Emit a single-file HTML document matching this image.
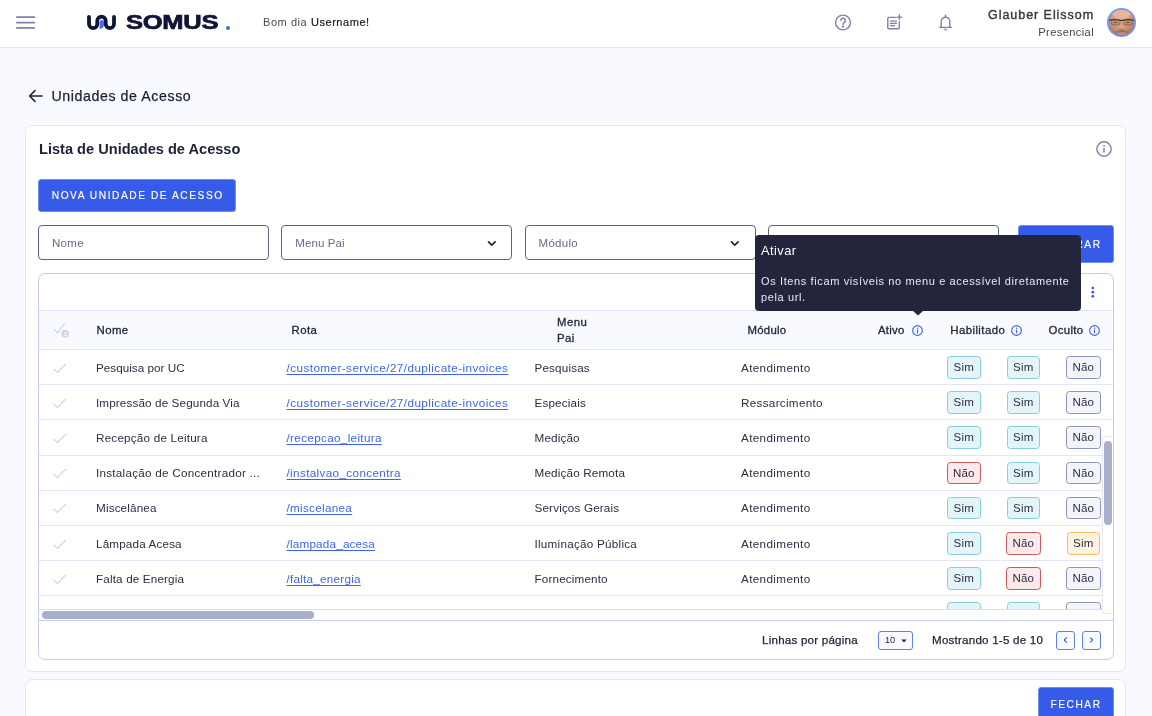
<!DOCTYPE html>
<html lang="pt-BR">
<head>
<meta charset="utf-8">
<title>Unidades de Acesso</title>
<style>
*{box-sizing:border-box;margin:0;padding:0}
html,body{width:1152px;height:716px;overflow:hidden}
body{background:#f8faff;font-family:"Liberation Sans",sans-serif;color:#23263b;position:relative;font-size:12px}
#wrap{position:absolute;left:0;top:0;width:1152px;height:716px;will-change:transform}
.abs{position:absolute}
.t{position:absolute;white-space:nowrap;line-height:1}
#hdr{position:absolute;left:0;top:0;width:1152px;height:48px;background:#fff;border-bottom:1px solid #e4e6f5}
#burger span{position:absolute;left:16px;width:19px;height:1.8px;background:#7e83a7;border-radius:1px}
.card{position:absolute;background:#fff;border:1px solid #e3e6f4;border-radius:7px}
.btn{position:absolute;background:#355be8;border:1px solid #6f8df3;border-radius:3px;color:#fff;font-size:10.2px;letter-spacing:1.55px;text-align:center;-webkit-text-stroke:.15px #fff}
.inp{position:absolute;height:35px;border:1px solid #5f6381;border-radius:4px;background:#fff;top:225px}
.inp .t{left:13px;top:11.5px;font-size:11.5px;color:#666a86;letter-spacing:.3px}
#tbl{position:absolute;left:38px;top:273px;width:1076px;height:387px;border:1px solid #c9cce6;border-radius:7px;background:#fff;overflow:hidden}
#thead{position:absolute;left:0;top:36px;width:1074px;height:40px;background:#f8faff;border-top:1px solid #dfe2f3;border-bottom:1px solid #dfe2f3}
.th{position:absolute;white-space:nowrap;font-size:11.4px;color:#23263b;line-height:1;letter-spacing:.42px;-webkit-text-stroke:.3px #23263b}
.row{position:absolute;left:0;width:1074px;height:35.2px;border-bottom:1px solid #e4e6f5}
.row .c{position:absolute;white-space:nowrap;font-size:11.7px;line-height:1;top:11.5px;color:#2b2e44}
.row a{color:#3f66ea;text-decoration:underline;text-decoration-thickness:1px;text-underline-offset:1.5px;text-decoration-skip-ink:none}
.bd{position:absolute;top:6.1px;height:22.5px;border:1px solid;border-radius:3.5px;font-size:11.5px;line-height:21.2px;text-align:center;color:#2b2e44;letter-spacing:.2px}
.sim{background:#e4f5fa;border-color:#86cfdb}
.nr{background:#fde9ea;border-color:#c9595b}
.ng{background:#f4f5fa;border-color:#8d94b6}
.so{background:#fef3e1;border-color:#f2bb62}
.chk{position:absolute;left:14.2px;top:12.6px}
.ft{position:absolute;white-space:nowrap;line-height:1;font-size:11.6px;letter-spacing:.22px;color:#23263b;-webkit-text-stroke:.25px #23263b;top:360.4px}
.pg{position:absolute;top:357px;width:19px;height:18.6px;border:1px solid #5f7ff0;border-radius:3px;background:#f8faff}
</style>
</head>
<body>
<div id="wrap">
<div id="hdr">
  <svg class="abs" style="left:14px;top:14px" width="24" height="18" viewBox="0 0 24 18" fill="none" stroke="#7e83a7" stroke-width="1.8" stroke-linecap="round"><path d="M2.9 3.2h17.3M2.9 8.55h17.3M2.9 13.9h17.3"/></svg>
  <svg class="abs" style="left:84px;top:10px" width="36" height="24" viewBox="0 0 36 24">
    <path d="M5 6.8v7.2a4.15 4.15 0 0 0 8.3 0v-3.2a4.2 4.2 0 0 1 8.4 0v3.2a4.15 4.15 0 0 0 8.3 0V6.8" fill="none" stroke="#0f1535" stroke-width="3.8" stroke-linecap="round"/>
    <path d="M15.6 12.2a2.2 2.2 0 0 1 4.4 0v2.6a4.2 4.2 0 0 1-4.4 4.1z" fill="#3f6df2"/>
  </svg>
  <div class="t" id="logo" style="left:126px;top:12.3px;font-size:20px;font-weight:bold;color:#0f1535;transform:scaleX(1.275);transform-origin:0 0;letter-spacing:-.2px;-webkit-text-stroke:.7px #0f1535">SOMUS</div>
  <div class="abs" style="left:225.6px;top:26px;width:4px;height:4px;border-radius:50%;background:#3f6df2"></div>
  <div class="t" style="left:263px;top:17px;font-size:11px;color:#4a4a50;letter-spacing:.56px">Bom dia <span style="color:#222228;-webkit-text-stroke:.2px #222228">Username!</span></div>
  <svg class="abs" style="left:833px;top:12px" width="22" height="22" viewBox="0 0 22 22" fill="none" stroke="#7d83a6" stroke-width="1.4" stroke-linecap="round" stroke-linejoin="round">
    <circle cx="10" cy="10.5" r="7.4"/>
    <path d="M7.8 8.6a2.3 2.3 0 1 1 3.4 2c-.8.5-1.2.9-1.2 1.9"/>
    <circle cx="10" cy="14.6" r=".5" fill="#7d83a6"/>
  </svg>
  <svg class="abs" style="left:885px;top:12px" width="22" height="22" viewBox="0 0 22 22" fill="none" stroke="#7d83a6" stroke-width="1.4" stroke-linecap="round" stroke-linejoin="round">
    <path d="M10.5 5.4H3.8a1 1 0 0 0-1 1v9.4a1 1 0 0 0 1 1h9.4a1 1 0 0 0 1-1V9.6"/>
    <path d="M5.3 9.2h6.2M5.3 11.4h6.2M5.3 13.6h4.4" stroke-width="1.2"/>
    <path d="M14.4 2.6v5M11.9 5.1h5"/>
  </svg>
  <svg class="abs" style="left:935px;top:12px" width="22" height="22" viewBox="0 0 22 22" fill="none" stroke="#7d83a6" stroke-width="1.4" stroke-linecap="round" stroke-linejoin="round">
    <path d="M4.6 15.4h11.8M6.2 15.2V9.6a4.3 4.3 0 0 1 8.6 0v5.6"/>
    <path d="M10.5 3.2v1.6"/>
    <path d="M9.3 17.4a1.3 1.3 0 0 0 2.4 0z" fill="#7d83a6" stroke-width=".6"/>
  </svg>
  <div class="t" style="right:58px;top:8.5px;font-size:12.5px;color:#3a3a3e;letter-spacing:.95px;-webkit-text-stroke:.4px #3a3a3e">Glauber Elissom</div>
  <div class="t" style="right:58px;top:27px;font-size:11.2px;color:#48484c;letter-spacing:.35px">Presencial</div>
  <svg class="abs" style="left:1106px;top:7px" width="31" height="31" viewBox="0 0 31 31">
    <defs>
      <clipPath id="avc"><circle cx="15.5" cy="15.5" r="12.7"/></clipPath>
      <radialGradient id="avg" cx="48%" cy="38%" r="62%"><stop offset="0" stop-color="#e2b497"/><stop offset=".55" stop-color="#cd9474"/><stop offset="1" stop-color="#9a6145"/></radialGradient>
      <filter id="avb" x="-20%" y="-20%" width="140%" height="140%"><feGaussianBlur stdDeviation=".55"/></filter>
    </defs>
    <circle cx="15.5" cy="15.5" r="14.5" fill="#7396f8"/>
    <g clip-path="url(#avc)">
      <rect width="31" height="31" fill="url(#avg)"/>
      <g filter="url(#avb)">
        <ellipse cx="15.5" cy="7" rx="9" ry="4.4" fill="#e3b79b"/>
        <rect x="4.4" y="13.3" width="10" height="4.6" rx="1.6" fill="#a58774" opacity=".6"/>
        <rect x="17" y="13.3" width="10" height="4.6" rx="1.6" fill="#a58774" opacity=".6"/>
        <path d="M3 13.4q5-1.2 10.4-.2l2.1.5 2.1-.5q5.4-1 10.4.2" stroke="#3b2f2b" stroke-width="1.25" fill="none"/>
        <path d="M5 15.2q.4 2.8 3 2.8h3.6q2.4 0 2.6-2.6M17.2 15.4q.2 2.6 2.6 2.6h3.6q2.6 0 3-2.8" stroke="#6b5348" stroke-width=".7" fill="none"/><ellipse cx="9.6" cy="15.4" rx="2" ry=".7" fill="#5a4338" opacity=".7"/><ellipse cx="21.8" cy="15.4" rx="2" ry=".7" fill="#5a4338" opacity=".7"/>
        <ellipse cx="15.6" cy="19.8" rx="2.6" ry="2.6" fill="#d9a284"/>
        <path d="M13.2 21.8q2.4 1.2 4.8 0" stroke="#a8694f" stroke-width=".8" fill="none"/>
        <path d="M9.6 24.6q6-3.2 12 0l-.8 1.4q-5.2-1.6-10.4 0z" fill="#8c776a"/>
        <ellipse cx="15.6" cy="26.6" rx="4.6" ry="1.3" fill="#cf8580"/>
        <ellipse cx="15.6" cy="29.8" rx="6" ry="1.6" fill="#b09484"/>
      </g>
    </g>
  </svg>
</div>

<svg class="abs" style="left:28px;top:89px" width="16" height="14" viewBox="0 0 16 14" fill="none" stroke="#1d2136" stroke-width="1.5" stroke-linecap="round" stroke-linejoin="round"><path d="M14 7H2M7 1.6L1.6 7 7 12.4"/></svg>
<div class="t" style="left:51.5px;top:89px;font-size:14.2px;color:#1d2136;letter-spacing:.58px;-webkit-text-stroke:.25px #1d2136">Unidades de Acesso</div>

<div class="card" style="left:25px;top:125px;width:1101px;height:547px"></div>
<div class="t" style="left:39px;top:141.5px;font-size:14.6px;font-weight:bold;color:#1d2136;letter-spacing:0">Lista de Unidades de Acesso</div>
<svg class="abs" style="left:1095px;top:140px" width="18" height="18" viewBox="0 0 18 18" fill="none" stroke="#7d82a6" stroke-width="1.4" stroke-linecap="round"><circle cx="9" cy="9" r="7.2"/><path d="M9 8.4v3.7" stroke-width="1.5"/><circle cx="9" cy="5.8" r=".55" fill="#7d82a6" stroke-width=".6"/></svg>

<div class="btn" style="left:38px;top:179px;width:198px;height:33px;line-height:32.4px;padding-left:1.5px">NOVA UNIDADE DE ACESSO</div>

<div class="inp" style="left:38px;width:231px"><span class="t">Nome</span></div>
<div class="inp" style="left:281.3px;width:230.7px"><span class="t" style="letter-spacing:.08px">Menu Pai</span><svg class="abs" style="right:14.4px;top:13.5px" width="11" height="8" viewBox="0 0 11 8" fill="none" stroke="#23263b" stroke-width="1.7" stroke-linecap="round" stroke-linejoin="round"><path d="M2.5 1.9l3.3 3.3 3.3-3.3"/></svg></div>
<div class="inp" style="left:524.5px;width:231px"><span class="t">Módulo</span><svg class="abs" style="right:14.4px;top:13.5px" width="11" height="8" viewBox="0 0 11 8" fill="none" stroke="#23263b" stroke-width="1.7" stroke-linecap="round" stroke-linejoin="round"><path d="M2.5 1.9l3.3 3.3 3.3-3.3"/></svg></div>
<div class="inp" style="left:767.6px;width:231px"></div>
<div class="btn" style="left:1018px;top:225px;width:96px;height:38px;line-height:38px;text-align:right;padding-right:11.4px">FILTRAR</div>

<div id="tbl">
  <svg class="abs" style="left:1051px;top:12px" width="6" height="14" viewBox="0 0 6 14" fill="#3058ee"><circle cx="2.8" cy="2" r="1.35"/><circle cx="2.8" cy="6.2" r="1.35"/><circle cx="2.8" cy="10.3" r="1.35"/></svg>
  <div id="thead">
    <svg class="abs" style="left:14px;top:11px" width="20" height="18" viewBox="0 0 20 18"><path d="M1.2 7.4l3.4 3.4L11.6 1.6" fill="none" stroke="#d3d6ec" stroke-width="1.3" stroke-linecap="round" stroke-linejoin="round"/><circle cx="12.2" cy="11.6" r="3.9" fill="#d3d6ec"/><text x="12.2" y="13.6" font-size="5.5" font-family="Liberation Sans, sans-serif" font-weight="bold" fill="#fff" text-anchor="middle">1</text></svg>
    <span class="th" style="left:57.5px;top:14.1px">Nome</span>
    <span class="th" style="left:252.5px;top:14.1px">Rota</span>
    <span class="th" style="left:518px;top:3.4px;line-height:16px;white-space:normal;width:40px">Menu Pai</span>
    <span class="th" style="left:708.5px;top:14.1px;letter-spacing:.27px">Módulo</span>
    <span class="th" style="left:839px;top:14.1px;letter-spacing:.27px">Ativo</span>
    <span class="th" style="left:911.3px;top:14.1px">Habilitado</span>
    <span class="th" style="left:1009.5px;top:14.1px;letter-spacing:.35px">Oculto</span>
    <svg class="abs" style="left:872.3px;top:13.1px" width="13" height="13" viewBox="0 0 13 13" fill="none" stroke="#3f66ea" stroke-width="1.15" stroke-linecap="round"><circle cx="6.5" cy="6.5" r="4.85"/><path d="M6.5 6.1v2.7"/><circle cx="6.5" cy="4.15" r=".4" fill="#3f66ea" stroke-width=".5"/></svg><svg class="abs" style="left:970.5px;top:13.1px" width="13" height="13" viewBox="0 0 13 13" fill="none" stroke="#3f66ea" stroke-width="1.15" stroke-linecap="round"><circle cx="6.5" cy="6.5" r="4.85"/><path d="M6.5 6.1v2.7"/><circle cx="6.5" cy="4.15" r=".4" fill="#3f66ea" stroke-width=".5"/></svg><svg class="abs" style="left:1048.9px;top:13.1px" width="13" height="13" viewBox="0 0 13 13" fill="none" stroke="#3f66ea" stroke-width="1.15" stroke-linecap="round"><circle cx="6.5" cy="6.5" r="4.85"/><path d="M6.5 6.1v2.7"/><circle cx="6.5" cy="4.15" r=".4" fill="#3f66ea" stroke-width=".5"/></svg>
  </div>
  <div style="position:absolute;left:0;top:0;width:1074px;height:335px;overflow:hidden">
<div class="row" style="top:76.0px"><svg class="chk" width="16" height="12" viewBox="0 0 16 12"><path d="M1 6.2l3.3 3.3L12.6 1.2" fill="none" stroke="#d6d9ee" stroke-width="1.3" stroke-linecap="round" stroke-linejoin="round"/></svg><span class="c" style="left:57px;letter-spacing:0.02px">Pesquisa por UC</span><span class="c" style="left:247.5px;letter-spacing:0.44px"><a>/customer-service/27/duplicate-invoices</a></span><span class="c" style="left:495.5px;letter-spacing:0.15px">Pesquisas</span><span class="c" style="left:702px;letter-spacing:0.36px">Atendimento</span><span class="bd sim" style="left:908px;width:33.5px">Sim</span><span class="bd sim" style="left:967.5px;width:33.5px">Sim</span><span class="bd ng" style="left:1027.0px;width:34.5px">Não</span></div>
<div class="row" style="top:111.2px"><svg class="chk" width="16" height="12" viewBox="0 0 16 12"><path d="M1 6.2l3.3 3.3L12.6 1.2" fill="none" stroke="#d6d9ee" stroke-width="1.3" stroke-linecap="round" stroke-linejoin="round"/></svg><span class="c" style="left:57px;letter-spacing:0.12px">Impressão de Segunda Via</span><span class="c" style="left:247.5px;letter-spacing:0.44px"><a>/customer-service/27/duplicate-invoices</a></span><span class="c" style="left:495.5px;letter-spacing:0.15px">Especiais</span><span class="c" style="left:702px;letter-spacing:0.3px">Ressarcimento</span><span class="bd sim" style="left:908px;width:33.5px">Sim</span><span class="bd sim" style="left:967.5px;width:33.5px">Sim</span><span class="bd ng" style="left:1027.0px;width:34.5px">Não</span></div>
<div class="row" style="top:146.4px"><svg class="chk" width="16" height="12" viewBox="0 0 16 12"><path d="M1 6.2l3.3 3.3L12.6 1.2" fill="none" stroke="#d6d9ee" stroke-width="1.3" stroke-linecap="round" stroke-linejoin="round"/></svg><span class="c" style="left:57px;letter-spacing:0.2px">Recepção de Leitura</span><span class="c" style="left:247.5px;letter-spacing:0.33px"><a>/recepcao_leitura</a></span><span class="c" style="left:495.5px;letter-spacing:0.15px">Medição</span><span class="c" style="left:702px;letter-spacing:0.36px">Atendimento</span><span class="bd sim" style="left:908px;width:33.5px">Sim</span><span class="bd sim" style="left:967.5px;width:33.5px">Sim</span><span class="bd ng" style="left:1027.0px;width:34.5px">Não</span></div>
<div class="row" style="top:181.6px"><svg class="chk" width="16" height="12" viewBox="0 0 16 12"><path d="M1 6.2l3.3 3.3L12.6 1.2" fill="none" stroke="#d6d9ee" stroke-width="1.3" stroke-linecap="round" stroke-linejoin="round"/></svg><span class="c" style="left:57px;letter-spacing:0.25px">Instalação de Concentrador ...</span><span class="c" style="left:247.5px;letter-spacing:0.36px"><a>/instalvao_concentra</a></span><span class="c" style="left:495.5px;letter-spacing:0.16px">Medição Remota</span><span class="c" style="left:702px;letter-spacing:0.36px">Atendimento</span><span class="bd nr" style="left:907.5px;width:34.5px">Não</span><span class="bd sim" style="left:967.5px;width:33.5px">Sim</span><span class="bd ng" style="left:1027.0px;width:34.5px">Não</span></div>
<div class="row" style="top:216.8px"><svg class="chk" width="16" height="12" viewBox="0 0 16 12"><path d="M1 6.2l3.3 3.3L12.6 1.2" fill="none" stroke="#d6d9ee" stroke-width="1.3" stroke-linecap="round" stroke-linejoin="round"/></svg><span class="c" style="left:57px;letter-spacing:0.15px">Miscelânea</span><span class="c" style="left:247.5px;letter-spacing:0.3px"><a>/miscelanea</a></span><span class="c" style="left:495.5px;letter-spacing:0.15px">Serviços Gerais</span><span class="c" style="left:702px;letter-spacing:0.36px">Atendimento</span><span class="bd sim" style="left:908px;width:33.5px">Sim</span><span class="bd sim" style="left:967.5px;width:33.5px">Sim</span><span class="bd ng" style="left:1027.0px;width:34.5px">Não</span></div>
<div class="row" style="top:252.0px"><svg class="chk" width="16" height="12" viewBox="0 0 16 12"><path d="M1 6.2l3.3 3.3L12.6 1.2" fill="none" stroke="#d6d9ee" stroke-width="1.3" stroke-linecap="round" stroke-linejoin="round"/></svg><span class="c" style="left:57px;letter-spacing:0.15px">Lâmpada Acesa</span><span class="c" style="left:247.5px;letter-spacing:0.2px"><a>/lampada_acesa</a></span><span class="c" style="left:495.5px;letter-spacing:0.25px">Iluminação Pública</span><span class="c" style="left:702px;letter-spacing:0.36px">Atendimento</span><span class="bd sim" style="left:908px;width:33.5px">Sim</span><span class="bd nr" style="left:967.0px;width:34.5px">Não</span><span class="bd so" style="left:1027.5px;width:33.5px">Sim</span></div>
<div class="row" style="top:287.2px"><svg class="chk" width="16" height="12" viewBox="0 0 16 12"><path d="M1 6.2l3.3 3.3L12.6 1.2" fill="none" stroke="#d6d9ee" stroke-width="1.3" stroke-linecap="round" stroke-linejoin="round"/></svg><span class="c" style="left:57px;letter-spacing:0.15px">Falta de Energia</span><span class="c" style="left:247.5px;letter-spacing:0.25px"><a>/falta_energia</a></span><span class="c" style="left:495.5px;letter-spacing:0.15px">Fornecimento</span><span class="c" style="left:702px;letter-spacing:0.36px">Atendimento</span><span class="bd sim" style="left:908px;width:33.5px">Sim</span><span class="bd nr" style="left:967.0px;width:34.5px">Não</span><span class="bd ng" style="left:1027.0px;width:34.5px">Não</span></div>
<div class="row" style="top:322.4px"><span class="bd sim" style="left:908px;width:33.5px">Sim</span><span class="bd sim" style="left:967.5px;width:33.5px">Sim</span><span class="bd ng" style="left:1027.0px;width:34.5px">Não</span></div>
  </div>
  <div class="abs" style="left:1063px;top:162px;width:11px;height:177.5px;background:#fff;border-left:1px solid #e6e8f5;border-top:1px solid #e6e8f5;border-bottom:1px solid #e6e8f5;z-index:2"></div>
  <div class="abs" style="left:1065px;top:166.5px;width:8px;height:84px;border-radius:4px;background:#a9aecb;z-index:3"></div>
  <div class="abs" style="left:0;top:335px;width:1074px;height:12.4px;background:#fff;border-top:1px solid #dcdff0;border-bottom:1px solid #c9cce6"></div>
  <div class="abs" style="left:2.5px;top:337.2px;width:272px;height:8px;border-radius:4px;background:#a9aecb"></div>
  <span class="ft" style="left:723px">Linhas por página</span>
  <div class="abs" style="left:839px;top:357px;width:35px;height:18.6px;border:1px solid #5f7ff0;border-radius:3px;background:#f8faff"><span class="t" style="left:6px;top:4.2px;font-size:9.2px;color:#23263b;letter-spacing:-.2px">10</span><svg class="abs" style="left:21.5px;top:7px" width="6" height="4" viewBox="0 0 6 4"><path d="M.4.4h5.2L3 3.6z" fill="#23263b"/></svg></div>
  <span class="ft" style="left:893px">Mostrando 1-5 de 10</span>
  <div class="pg" style="left:1017px"><svg class="abs" style="left:5px;top:4.4px" width="7" height="8" viewBox="0 0 7 8" fill="none" stroke="#355be8" stroke-width="1.1" stroke-linecap="round" stroke-linejoin="round"><path d="M4.4 1.8L2.3 4l2.1 2.2"/></svg></div>
  <div class="pg" style="left:1042.6px"><svg class="abs" style="left:5px;top:4.4px" width="7" height="8" viewBox="0 0 7 8" fill="none" stroke="#355be8" stroke-width="1.1" stroke-linecap="round" stroke-linejoin="round"><path d="M2.6 1.8L4.7 4 2.6 6.2"/></svg></div>
</div>

<div class="abs" style="left:754.5px;top:235px;width:326px;height:76px;background:#22253c;border-radius:4px"></div>
<svg class="abs" style="left:911.5px;top:310px" width="12" height="6" viewBox="0 0 12 6"><path d="M0 0h12L6 5.4z" fill="#22253c"/></svg>
<div class="t" style="left:761px;top:244.5px;font-size:12.8px;color:#fff;letter-spacing:.45px">Ativar</div>
<div class="t" style="left:761px;top:276px;font-size:11px;color:#e8e9f2;letter-spacing:.62px">Os Itens ficam visíveis no menu e acessível diretamente</div>
<div class="t" style="left:761px;top:292px;font-size:11px;color:#e8e9f2;letter-spacing:.62px">pela url.</div>

<div class="card" style="left:25px;top:679px;width:1101px;height:60px"></div>
<div class="btn" style="left:1038px;top:687px;width:76px;height:38px;line-height:34px">FECHAR</div>
</div>
</body>
</html>
